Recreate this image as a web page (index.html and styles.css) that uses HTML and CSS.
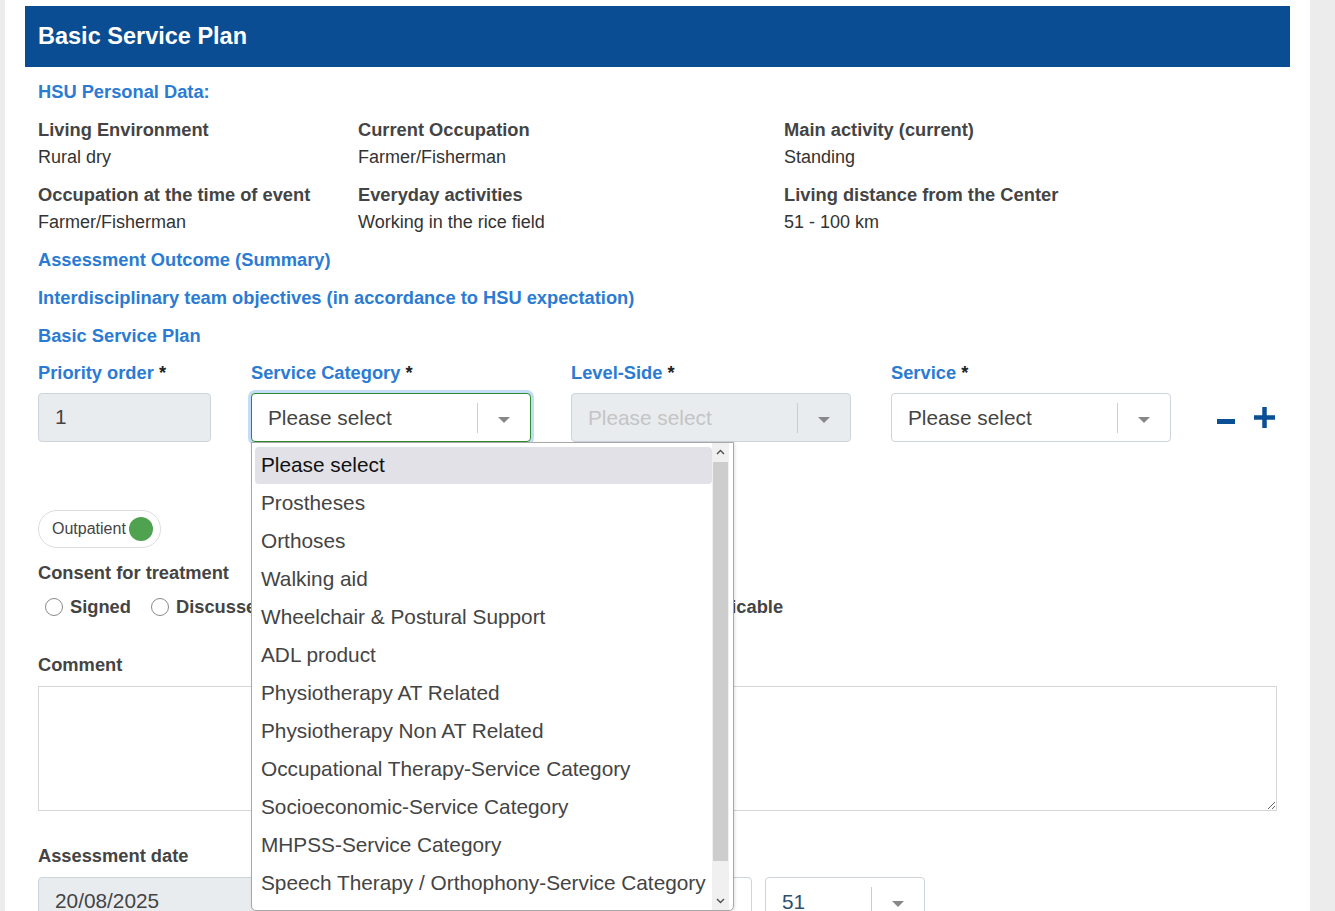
FILE: index.html
```html
<!DOCTYPE html>
<html lang="en">
<head>
<meta charset="utf-8">
<title>Basic Service Plan</title>
<link rel="stylesheet" href="styles.css">
</head>
<body>
<div class="panel">
  <div class="titlebar">Basic Service Plan</div>
  <div class="content">
    <div class="section-title first">HSU Personal Data:</div>
    <div class="data-grid">
      <div class="cell"><div class="lbl">Living Environment</div><div class="val">Rural dry</div></div>
      <div class="cell"><div class="lbl">Current Occupation</div><div class="val">Farmer/Fisherman</div></div>
      <div class="cell"><div class="lbl">Main activity (current)</div><div class="val">Standing</div></div>
      <div class="cell"><div class="lbl">Occupation at the time of event</div><div class="val">Farmer/Fisherman</div></div>
      <div class="cell"><div class="lbl">Everyday activities</div><div class="val">Working in the rice field</div></div>
      <div class="cell"><div class="lbl">Living distance from the Center</div><div class="val">51 - 100 km</div></div>
    </div>
    <div class="section-title after-grid">Assessment Outcome (Summary)</div>
    <div class="section-title">Interdisciplinary team objectives (in accordance to HSU expectation)</div>
    <div class="section-title">Basic Service Plan</div>

    <div class="form-row">
      <div class="field f-priority">
        <label class="flabel">Priority order <span class="req">*</span></label>
        <div class="input disabled">1</div>
      </div>
      <div class="field f-select anchor">
        <label class="flabel">Service Category <span class="req">*</span></label>
        <div class="select focused">
          <span class="sel-text">Please select</span>
          <span class="sel-sep"></span>
          <span class="sel-arrow"></span>
        </div>
        <div class="dropdown">
          <ul class="options">
            <li class="opt active">Please select</li>
            <li class="opt">Prostheses</li>
            <li class="opt">Orthoses</li>
            <li class="opt">Walking aid</li>
            <li class="opt">Wheelchair &amp; Postural Support</li>
            <li class="opt">ADL product</li>
            <li class="opt">Physiotherapy AT Related</li>
            <li class="opt">Physiotherapy Non AT Related</li>
            <li class="opt">Occupational Therapy-Service Category</li>
            <li class="opt">Socioeconomic-Service Category</li>
            <li class="opt">MHPSS-Service Category</li>
            <li class="opt">Speech Therapy / Orthophony-Service Category</li>
            <li class="opt">Other</li>
          </ul>
          <div class="scrollbar">
            <div class="sb-btn"><svg width="9" height="6" viewBox="0 0 9 6"><path d="M1 5 L4.5 1.5 L8 5" fill="none" stroke="#505050" stroke-width="1.4"/></svg></div>
            <div class="sb-thumb"></div>
            <div class="sb-track"></div>
            <div class="sb-btn"><svg width="9" height="6" viewBox="0 0 9 6"><path d="M1 1 L4.5 4.5 L8 1" fill="none" stroke="#505050" stroke-width="1.4"/></svg></div>
          </div>
        </div>
      </div>
      <div class="field f-select">
        <label class="flabel">Level-Side <span class="req">*</span></label>
        <div class="select disabled">
          <span class="sel-text muted">Please select</span>
          <span class="sel-sep"></span>
          <span class="sel-arrow"></span>
        </div>
      </div>
      <div class="field f-select">
        <label class="flabel">Service <span class="req">*</span></label>
        <div class="select">
          <span class="sel-text">Please select</span>
          <span class="sel-sep"></span>
          <span class="sel-arrow"></span>
        </div>
      </div>
      <div class="actions">
        <svg class="ico-minus" width="18" height="5" viewBox="0 0 18 5"><rect x="0" y="0" width="18" height="5" fill="#0b4f95"/></svg>
        <svg class="ico-plus" width="21" height="21" viewBox="0 0 21 21"><rect x="0" y="8.25" width="21" height="4.5" fill="#0b4f95"/><rect x="8.25" y="0" width="4.5" height="21" fill="#0b4f95"/></svg>
      </div>
    </div>

    <div class="pill">
      <span>Outpatient</span>
      <span class="dot"></span>
    </div>

    <div class="lbl gray consent">Consent for treatment</div>
    <div class="radios">
      <label class="radio"><span class="circle"></span>Signed</label>
      <label class="radio"><span class="circle"></span>Discussed but not signed</label>
      <label class="radio tight"><span class="circle"></span>Verbal consent only</label>
      <label class="radio"><span class="circle"></span>Not applicable</label>
    </div>

    <div class="lbl gray comment">Comment</div>
    <textarea class="textarea"></textarea>

    <div class="lbl gray date-lbl">Assessment date</div>
    <div class="date-row">
      <div class="input disabled date">20/08/2025</div>
      <div class="select small">
        <span class="sel-text">10</span>
        <span class="sel-sep"></span>
        <span class="sel-arrow"></span>
      </div>
      <div class="select small">
        <span class="sel-text num">51</span>
        <span class="sel-sep"></span>
        <span class="sel-arrow"></span>
      </div>
    </div>
  </div>
</div>
</body>
</html>
```
FILE: styles.css
```css
* { box-sizing: border-box; }
html, body { margin: 0; padding: 0; }
body {
  background: #ececec;
  font-family: "Liberation Sans", Arial, sans-serif;
  color: #333;
  height: 911px;
  overflow: hidden;
}
.panel {
  margin-left: 5px;
  width: 1305px;
  min-height: 911px;
  background: #fff;
  padding-top: 6px;
}
.titlebar {
  margin: 0 20px;
  height: 61px;
  background: #0a4d92;
  color: #fff;
  font-weight: bold;
  font-size: 23.5px;
  line-height: 61px;
  padding-left: 13px;
}
.content {
  padding: 0 33px;
}
.section-title {
  color: #2b7bd3;
  font-weight: bold;
  font-size: 18.3px;
  line-height: 38px;
  height: 38px;
}
.section-title.first { margin-top: 6px; }
.section-title.after-grid { margin-top: 5px; }
.data-grid {
  margin-top: 6px;
  display: grid;
  grid-template-columns: 320px 426px 1fr;
  row-gap: 11px;
}
.lbl {
  font-weight: bold;
  font-size: 18.3px;
  line-height: 27px;
  color: #444;
}
.cell .lbl { line-height: 25px; margin-bottom: 1px; }
.val {
  font-size: 18px;
  line-height: 28px;
  color: #333;
}
.cell .val { margin-bottom: 0; }
.form-row {
  display: flex;
  align-items: flex-start;
  gap: 40px;
  margin-top: 5px;
}
.field { display: flex; flex-direction: column; }
.f-priority { width: 173px; }
.f-select { width: 280px; }
.anchor { position: relative; }
.flabel {
  color: #2b7bd3;
  font-weight: bold;
  font-size: 18.3px;
  line-height: 26px;
  height: 26px;
  margin-bottom: 7px;
}
.req { color: #222; }
.input {
  height: 49px;
  border: 1px solid #ced4da;
  border-radius: 4px;
  padding-left: 16px;
  font-size: 20.8px;
  line-height: 46px;
  color: #444;
  background: #fff;
}
.input.disabled { background: #e9ecef; }
.select {
  position: relative;
  height: 49px;
  border: 1px solid #ced4da;
  border-radius: 4px;
  background: #fff;
  display: flex;
  align-items: center;
  padding-left: 16px;
}
.select.focused {
  border-color: #2e8b2e;
  box-shadow: 0 0 0 3px #c3ddf8;
}
.select.disabled { background: #e9ecef; }
.sel-text {
  flex: 1;
  font-size: 20.8px;
  color: #444;
}
.sel-text.muted { color: #c4c4c4; }
.sel-text.num { color: #2f4f6f; }
.sel-sep {
  width: 1px;
  height: 30px;
  background: #ccc;
  margin-right: 20px;
}
.sel-arrow {
  width: 0;
  height: 0;
  border-left: 6px solid transparent;
  border-right: 6px solid transparent;
  border-top: 6px solid #888;
  margin-right: 20px;
  margin-top: 5px;
}
.actions {
  display: flex;
  align-items: center;
  gap: 19px;
  margin-left: 6px;
  margin-top: 46px;
  height: 22px;
}
.ico-minus { margin-top: 8px; }

/* dropdown overlay */
.dropdown {
  position: absolute;
  top: 100%;
  left: 0;
  width: 483px;
  height: 469px;
  background: #fff;
  border: 1px solid #a8a8a8;
  border-radius: 0 0 5px 5px;
  display: flex;
  padding-right: 4px;
  overflow: hidden;
  z-index: 10;
  box-shadow: 1px 1px 3px rgba(0,0,0,0.12);
}
.options {
  list-style: none;
  margin: 0;
  padding: 4px 0 0 3px;
  flex: 1;
  overflow: hidden;
}
.opt {
  height: 38px;
  line-height: 35px;
  padding-left: 6px;
  font-size: 20.8px;
  color: #444;
  white-space: nowrap;
}
.opt.active {
  background: #e1e1e7;
  border-radius: 4px;
  color: #111;
  height: 37px;
  margin-bottom: 1px;
}
.scrollbar {
  width: 17px;
  display: flex;
  flex-direction: column;
  background: #f0f0f0;
}
.sb-btn {
  height: 18px;
  display: flex;
  align-items: center;
  justify-content: center;
}
.sb-thumb {
  height: 399px;
  background: #cdcdcd;
  margin: 1px 1px 0 1px;
}
.sb-track { flex: 1; }

/* outpatient pill */
.pill {
  margin-top: 68px;
  width: 123px;
  height: 38px;
  border: 1px solid #ddd;
  border-radius: 19px;
  display: flex;
  align-items: center;
  padding-left: 13px;
  gap: 3px;
  font-size: 16px;
  color: #444;
}
.dot {
  width: 24px;
  height: 24px;
  border-radius: 50%;
  background: #4fa24f;
}
.consent { margin-top: 12px; line-height: 26px; }
.radios {
  margin-top: 8px;
  display: flex;
  gap: 20px;
  padding-left: 7px;
  height: 26px;
  align-items: center;
}
.radio {
  display: flex;
  align-items: center;
  gap: 7px;
  font-weight: bold;
  font-size: 18.3px;
  color: #444;
  white-space: nowrap;
}
.radio.tight { margin-right: -3px; }
.circle {
  width: 18px;
  height: 18px;
  border-radius: 50%;
  border: 1px solid #8a8a8a;
  background: #fff;
}
.comment { margin-top: 32px; line-height: 26px; }
.textarea {
  display: block;
  margin-top: 8px;
  width: 1239px;
  height: 125px;
  border: 1px solid #d6d6d6;
  resize: vertical;
  font-family: inherit;
  font-size: 18px;
}
.date-lbl { margin-top: 32px; line-height: 26px; }
.date-row {
  margin-top: 8px;
  display: flex;
  gap: 13px;
}
.date { width: 541px; }
.select.small { width: 160px; }
```
